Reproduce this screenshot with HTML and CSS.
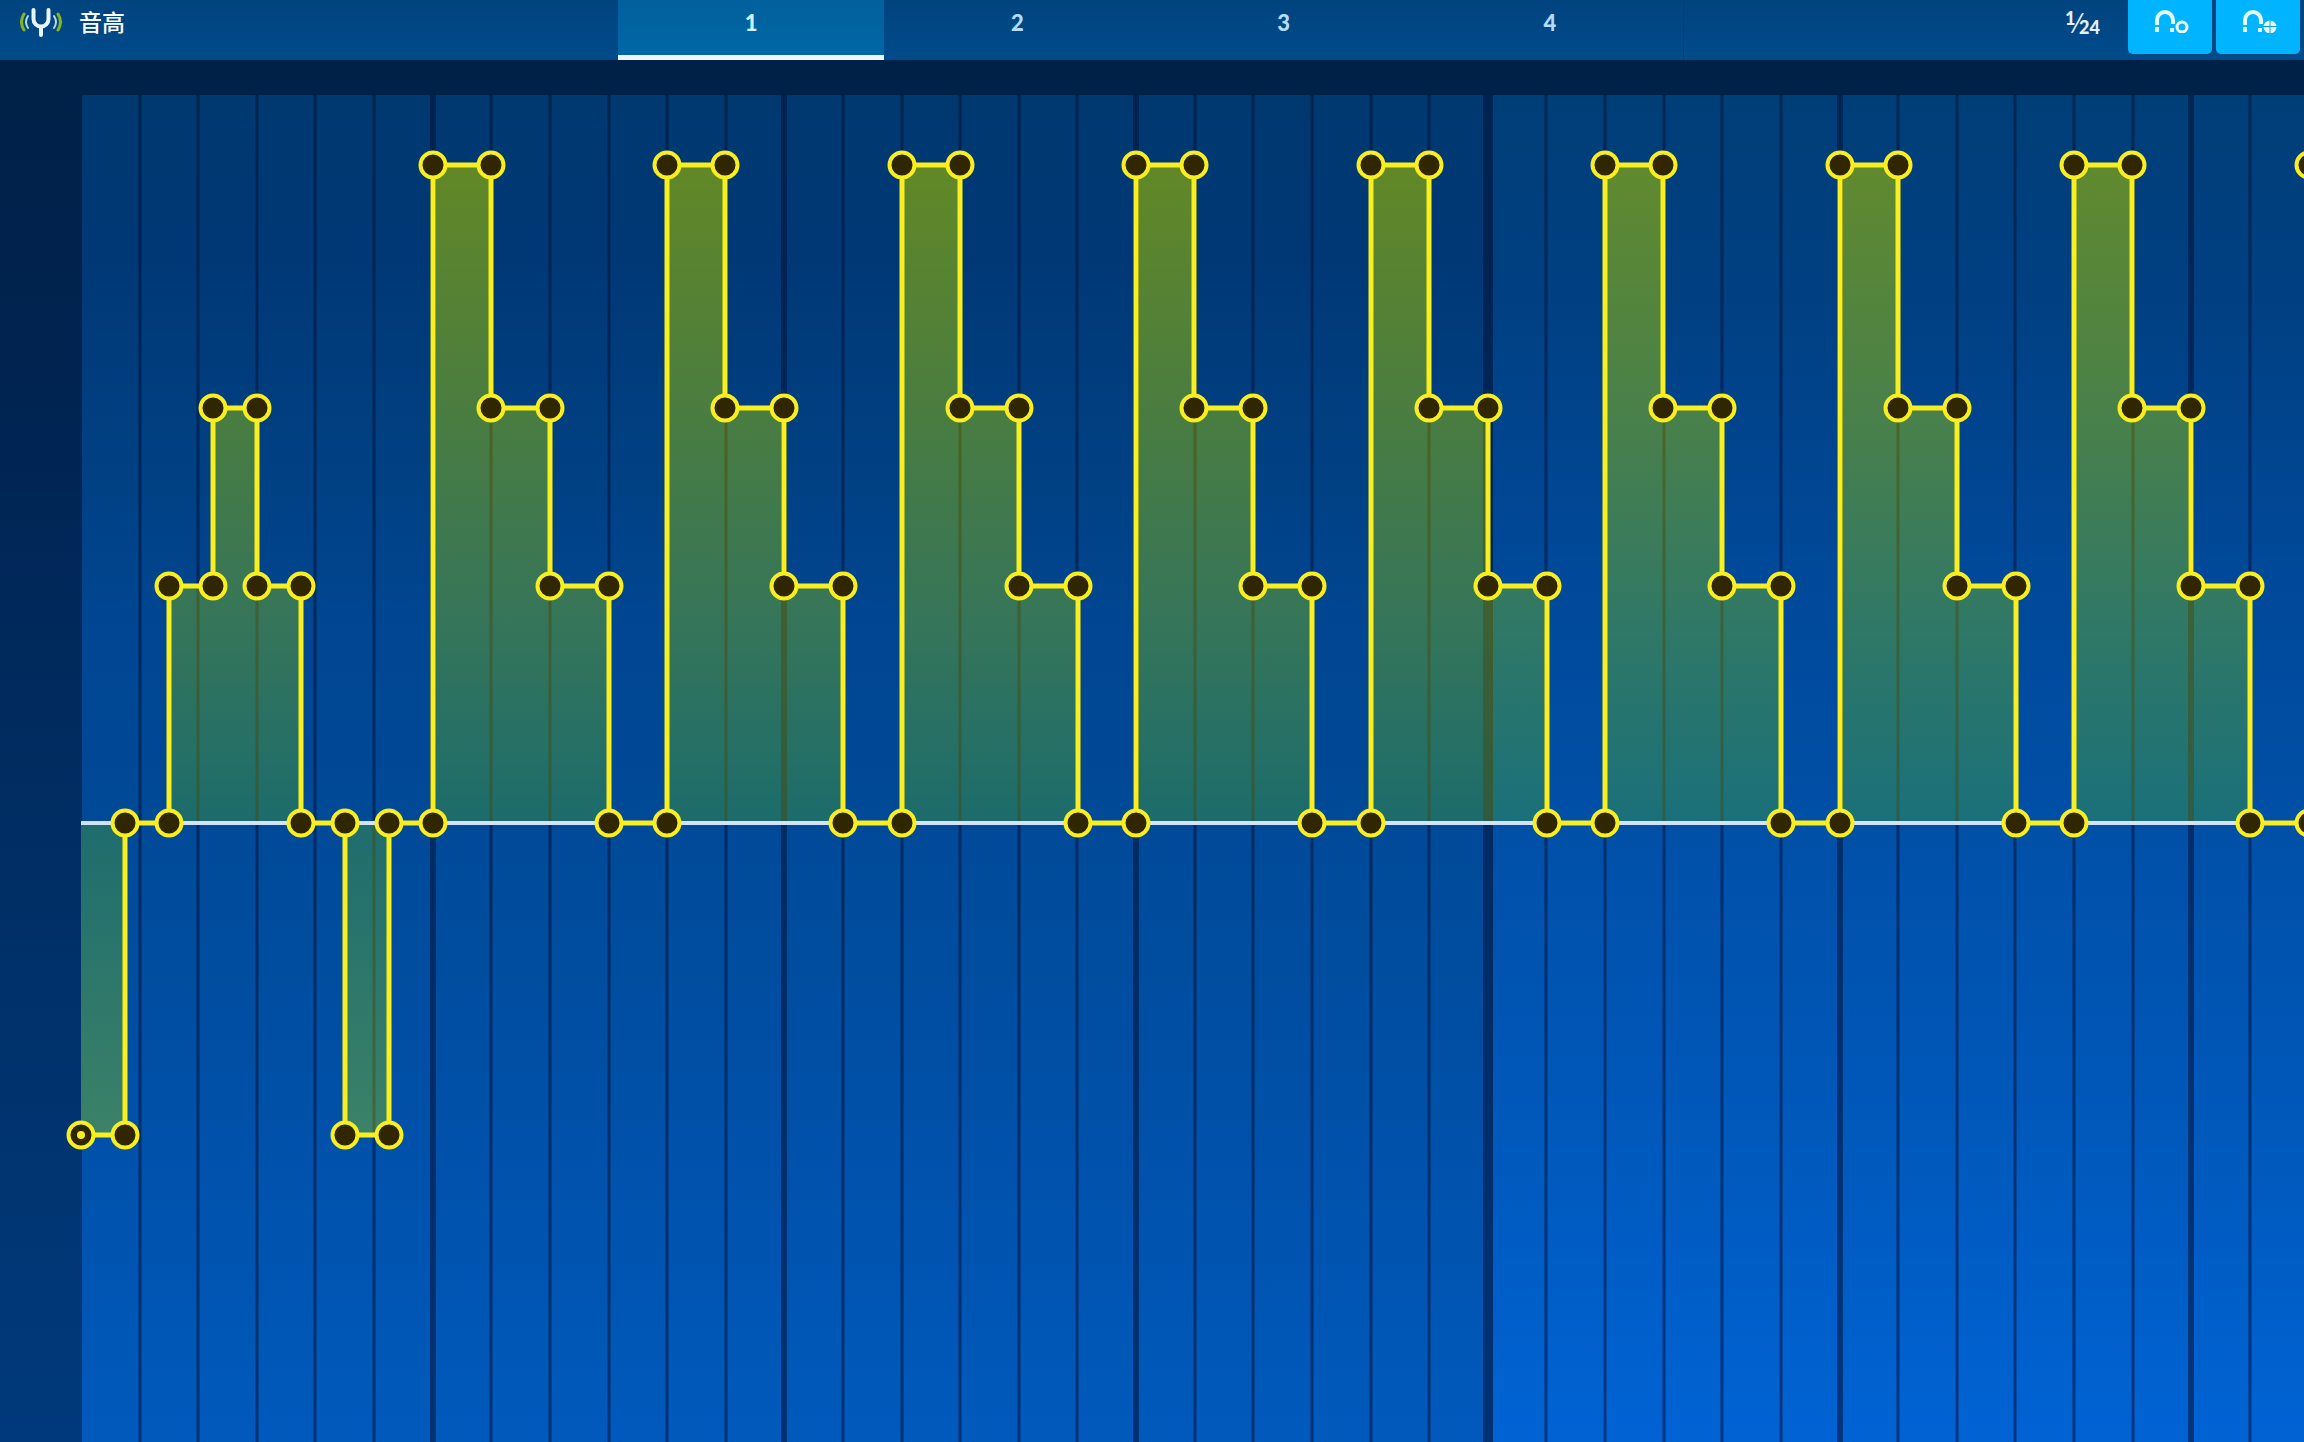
FILE: index.html
```html
<!DOCTYPE html>
<html lang="zh">
<head>
<meta charset="utf-8">
<title>音高</title>
<link rel="stylesheet" href="styles.css">
</head>
<body>
<header class="toolbar">
  <h1 class="title">
    <svg class="fork" viewBox="0 0 42 30" aria-hidden="true">
      <path class="fork-body" d="M13.500 3V12a7.500 7.500 0 0 0 15 0V3M21 20v8"/>
      <path class="wave-in" d="M8 9q-4 6 0 12M34 9q4 6 0 12"/>
      <path class="wave-out" d="M4 7q-5 8 0 16M38 7q5 8 0 16"/>
    </svg>
    <span>音高</span>
  </h1>
  <nav class="tabs">
    <button class="tab active" type="button">1</button>
    <button class="tab" type="button">2</button>
    <button class="tab" type="button">3</button>
    <button class="tab" type="button">4</button>
  </nav>
  <div class="tools">
    <button class="fraction" type="button"><span class="num">1</span><span class="slash">⁄</span><span class="den">24</span></button>
    <button class="snap" type="button" aria-label="Snap to points">
      <svg viewBox="0 0 36 24" aria-hidden="true">
        <path class="magnet" d="M3 16v-5a8 8 0 0 1 16 0v4M3 18v5M18 19v4"/>
        <circle class="ring" cx="28" cy="18" r="5"/>
      </svg>
    </button>
    <button class="snap" type="button" aria-label="Snap to grid">
      <svg viewBox="0 0 36 24" aria-hidden="true">
        <path class="magnet" d="M3 16v-5a8 8 0 0 1 16 0v4M3 18v5M18 19v4"/>
        <circle class="disc" cx="28" cy="18" r="6.500"/>
        <path class="cross" d="M28 11v14M21 17.500h14"/>
      </svg>
    </button>
  </div>
</header>
<main class="editor">
  <svg class="curve-view" viewBox="0 0 2304 1382" preserveAspectRatio="xMinYMin slice" role="img" aria-label="音高">
    <defs>
      <linearGradient id="sheet" x1="0" y1="0" x2="0" y2="1">
        <stop offset="0" stop-color="#003870"/>
        <stop offset=".12" stop-color="#003876"/>
        <stop offset=".27" stop-color="#004082"/>
        <stop offset=".4" stop-color="#004692"/>
        <stop offset=".56" stop-color="#004a99"/>
        <stop offset=".78" stop-color="#0051aa"/>
        <stop offset="1" stop-color="#005abc"/>
      </linearGradient>
      <linearGradient id="next-sheet" x1="0" y1="0" x2="0" y2="1">
        <stop offset="0" stop-color="#003e78"/>
        <stop offset=".15" stop-color="#004082"/>
        <stop offset=".34" stop-color="#004898"/>
        <stop offset=".55" stop-color="#0050a8"/>
        <stop offset=".78" stop-color="#0059bc"/>
        <stop offset="1" stop-color="#0063d4"/>
      </linearGradient>
      <linearGradient id="rise" gradientUnits="userSpaceOnUse" x1="0" y1="105" x2="0" y2="763">
        <stop offset="0" stop-color="#628826"/>
        <stop offset=".4" stop-color="#487c42"/>
        <stop offset=".7" stop-color="#35755a"/>
        <stop offset="1" stop-color="#1c6c6c"/>
      </linearGradient>
      <linearGradient id="next-rise" gradientUnits="userSpaceOnUse" x1="0" y1="105" x2="0" y2="763">
        <stop offset="0" stop-color="#618a2e"/>
        <stop offset=".4" stop-color="#48804c"/>
        <stop offset=".7" stop-color="#307866"/>
        <stop offset="1" stop-color="#1a707a"/>
      </linearGradient>
      <linearGradient id="drop" gradientUnits="userSpaceOnUse" x1="0" y1="763" x2="0" y2="1075">
        <stop offset="0" stop-color="#1e6c6e"/>
        <stop offset="1" stop-color="#3c8268"/>
      </linearGradient>
      <path id="step-area" d="M433 763V105h58v243h59v178h59v237z"/>
      <path id="intro-area" d="M169 763V526h44V348h44v178h44v237z"/>
      <path id="dip-area" d="M81 763h44v312H81zM345 763h44v312h-44z"/>
      <g id="node"><circle r="12.500"/></g>
      <g id="step-curve">
        <path class="curve" d="M433 763V105h58v243h59v178h59v237h58"/>
        <use href="#node" x="433" y="763"/><use href="#node" x="433" y="105"/>
        <use href="#node" x="491" y="105"/><use href="#node" x="491" y="348"/>
        <use href="#node" x="550" y="348"/><use href="#node" x="550" y="526"/>
        <use href="#node" x="609" y="526"/><use href="#node" x="609" y="763"/>
      </g>
      <g id="lines">
        <path class="thin" d="M140 35V1382M198 35V1382M257 35V1382M315 35V1382M374 35V1382M491 35V1382M550 35V1382M609 35V1382M667 35V1382M726 35V1382M843 35V1382M902 35V1382M960 35V1382M1019 35V1382M1077 35V1382M1195 35V1382M1253 35V1382M1312 35V1382M1371 35V1382M1429 35V1382M1546 35V1382M1605 35V1382M1664 35V1382M1722 35V1382M1781 35V1382M1898 35V1382M1957 35V1382M2015 35V1382M2074 35V1382M2133 35V1382M2250 35V1382"/>
        <path class="beat" d="M433 35V1382M784 35V1382M1136 35V1382M1840 35V1382M2191 35V1382"/>
        <path class="bar" d="M1488 35V1382"/>
      </g>
      <clipPath id="filled">
        <use href="#dip-area"/><use href="#intro-area"/>
        <use href="#step-area"/><use href="#step-area" x="234"/><use href="#step-area" x="469"/><use href="#step-area" x="703"/>
        <use href="#step-area" x="938"/><use href="#step-area" x="1172"/><use href="#step-area" x="1407"/><use href="#step-area" x="1641"/>
      </clipPath>
    </defs>

    <rect x="82" y="35" width="2222" height="1347" fill="url(#sheet)"/>
    <rect x="1493" y="35" width="811" height="1347" fill="url(#next-sheet)"/>
    <use class="grid" href="#lines"/>

    <g clip-path="url(#filled)">
      <rect x="82" y="35" width="1411" height="728" fill="url(#rise)"/>
      <rect x="1493" y="35" width="811" height="728" fill="url(#next-rise)"/>
      <rect x="81" y="763" width="2223" height="312" fill="url(#drop)"/>
      <use class="grid-filled" href="#lines"/>
    </g>

    <path class="zero" d="M81 763H2304"/>

    <g class="envelope">
      <path class="curve" d="M81 1075h44V763h44V526h44V348h44v178h44v237h44v312h44V763h44"/>
      <use href="#node" x="81" y="1075"/><circle class="start-dot" cx="81" cy="1075" r="4"/>
      <use href="#node" x="125" y="1075"/><use href="#node" x="125" y="763"/>
      <use href="#node" x="169" y="763"/><use href="#node" x="169" y="526"/>
      <use href="#node" x="213" y="526"/><use href="#node" x="213" y="348"/>
      <use href="#node" x="257" y="348"/><use href="#node" x="257" y="526"/>
      <use href="#node" x="301" y="526"/><use href="#node" x="301" y="763"/>
      <use href="#node" x="345" y="763"/><use href="#node" x="345" y="1075"/>
      <use href="#node" x="389" y="1075"/><use href="#node" x="389" y="763"/>
      <use href="#step-curve"/><use href="#step-curve" x="234"/><use href="#step-curve" x="469"/><use href="#step-curve" x="703"/>
      <use href="#step-curve" x="938"/><use href="#step-curve" x="1172"/><use href="#step-curve" x="1407"/><use href="#step-curve" x="1641"/>
      <use href="#step-curve" x="1876"/>
    </g>
  </svg>
</main>
</body>
</html>
```
FILE: styles.css
```css
* { box-sizing: border-box; }

body {
  margin: 0;
  height: 100vh;
  display: flex;
  flex-direction: column;
  background: #002147;
  color: #fff;
  font-family: Lato, "Noto Sans CJK SC", sans-serif;
  overflow: hidden;
}

button {
  margin: 0;
  padding: 0;
  border: 0;
  background: none;
  color: inherit;
  font: inherit;
}

.toolbar {
  flex: none;
  height: 60px;
  display: grid;
  grid-template-columns: 618px 1fr 620px;
  background: linear-gradient(#00447f, #004b8b);
}

.title {
  display: flex;
  align-items: center;
  align-self: start;
  gap: 17px;
  height: 44px;
  margin: 0;
  padding-left: 20px;
  font-size: 23px;
  font-weight: 500;
  line-height: 32px;
}

.fork {
  width: 42px;
  height: 30px;
  fill: none;
  stroke-linecap: round;
}

.fork-body { stroke: #e8f4ff; stroke-width: 4; }
.wave-in { stroke: #b5dcd8; stroke-width: 2; }
.wave-out { stroke: #86b51c; stroke-width: 3; }

.tabs {
  display: grid;
  grid-template-columns: repeat(4, 1fr);
  border-right: 1px solid #004078;
}

.tab {
  padding-bottom: 10px;
  border-bottom: 5px solid transparent;
  color: #b4dcfa;
  font-size: 22px;
  font-weight: 900;
  line-height: 28px;
}

.tab.active {
  border-bottom-color: #f0f4ff;
  background: linear-gradient(#00619c, #0067a6);
  background-clip: padding-box;
  color: #d4f2ff;
}

.tools {
  display: flex;
  justify-content: flex-end;
  align-items: flex-start;
  gap: 4px;
  padding-right: 4px;
}

.fraction {
  display: flex;
  height: 44px;
  padding: 8px 24px 0 0;
  color: #e4f0ff;
  font-weight: 900;
}

.num { font-size: 18px; line-height: 20px; }
.slash { font-size: 26px; line-height: 30px; font-weight: 400; }
.den { padding-top: 9px; font-size: 18px; line-height: 20px; }

.snap {
  display: flex;
  justify-content: center;
  width: 84px;
  height: 54px;
  padding: 9px 0 0 4px;
  border-radius: 0 0 5px 5px;
  background: #00b4ff;
}

.snap svg { width: 36px; height: 24px; }
.magnet { fill: none; stroke: #e2fbff; stroke-width: 4; }
.ring { fill: #00b4ff; stroke: #f4fdff; stroke-width: 3; }
.disc { fill: #f0fdff; }
.cross { fill: none; stroke: #00a0e8; stroke-width: 1; }

.editor {
  flex: 1;
  min-height: 0;
  background: linear-gradient(#002147, #002452 25%, #002f66 60%, #003a7c);
}

.curve-view {
  display: block;
  width: 100%;
  height: 100%;
}

.grid { stroke: #001238; stroke-opacity: .55; }
.grid-filled { stroke: #4c4200; stroke-opacity: .42; }
.thin { stroke-width: 3; }
.beat { stroke-width: 6; }
.bar { stroke-width: 10; }

.zero { stroke: #d2e2f8; stroke-width: 4; }

.envelope {
  fill: #302600;
  stroke: #f8ee20;
  stroke-width: 4;
}

.curve { fill: none; stroke-width: 5; }
.start-dot { fill: #f8ee20; stroke: none; }
```
